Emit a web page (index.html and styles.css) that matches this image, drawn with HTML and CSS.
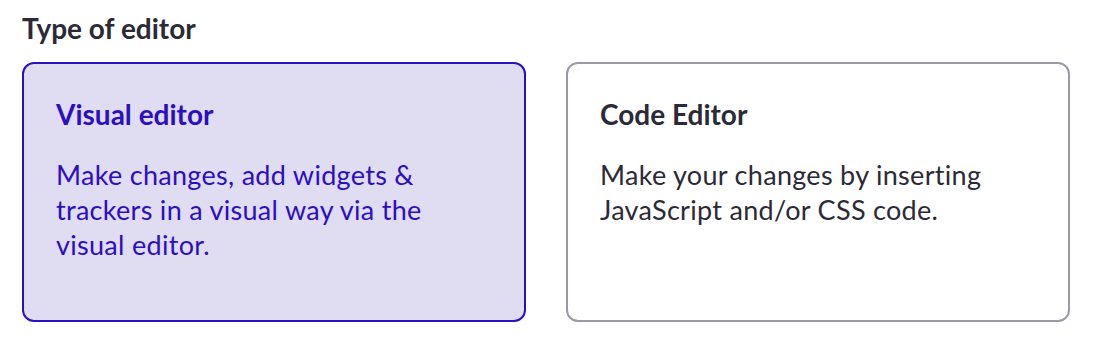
FILE: index.html
```html
<!DOCTYPE html>
<html lang="en">

<head>
    <meta charset="UTF-8">
    <title>Type of editor</title>
    <link rel="stylesheet" href="styles.css">
</head>

<body>
    <div class="editor-type">
        <h3 class="editor-type-label">Type of editor</h3>
        <div class="editor-options">
            <!-- Visual editor (selected) -->
            <div class="editor-card selected">
                <h4>Visual editor</h4>
                <p>Make changes, add widgets &amp; trackers in a visual way via the visual editor.</p>
            </div>
            <!-- Code editor -->
            <div class="editor-card">
                <h4>Code Editor</h4>
                <p>Make your changes by inserting JavaScript and/or CSS code.</p>
            </div>
        </div>
    </div>
</body>

</html>
```

FILE: styles.css
```css
body {
    font-family: Lato, "Liberation Sans", sans-serif;
    background-color: #ffffff;
    margin: 0;
    padding: 0;
    color: #2b2a36;
}

.editor-type {
    padding: 11px 28px 0 22px;
}

.editor-type-label {
    font-size: 28px;
    font-weight: bold;
    line-height: 34px;
    margin: 0 0 17px;
    color: #2b2a36;
}

.editor-options {
    display: grid;
    grid-template-columns: 1fr 1fr;
    gap: 40px;
}

.editor-card {
    height: 260px;
    box-sizing: border-box;
    padding: 33px 32px;
    border: 2px solid #9b99a6;
    border-radius: 12px;
    background-color: #ffffff;
    cursor: pointer;
}

.editor-card h4 {
    font-size: 28px;
    font-weight: bold;
    line-height: 34px;
    margin: 0 0 26px;
}

.editor-card p {
    font-size: 27px;
    letter-spacing: 0.3px;
    line-height: 35px;
    margin: 0;
}

.editor-card.selected {
    border-color: #2c0fbf;
    background-color: #e0dcf2;
    color: #2c0fbf;
}
```
